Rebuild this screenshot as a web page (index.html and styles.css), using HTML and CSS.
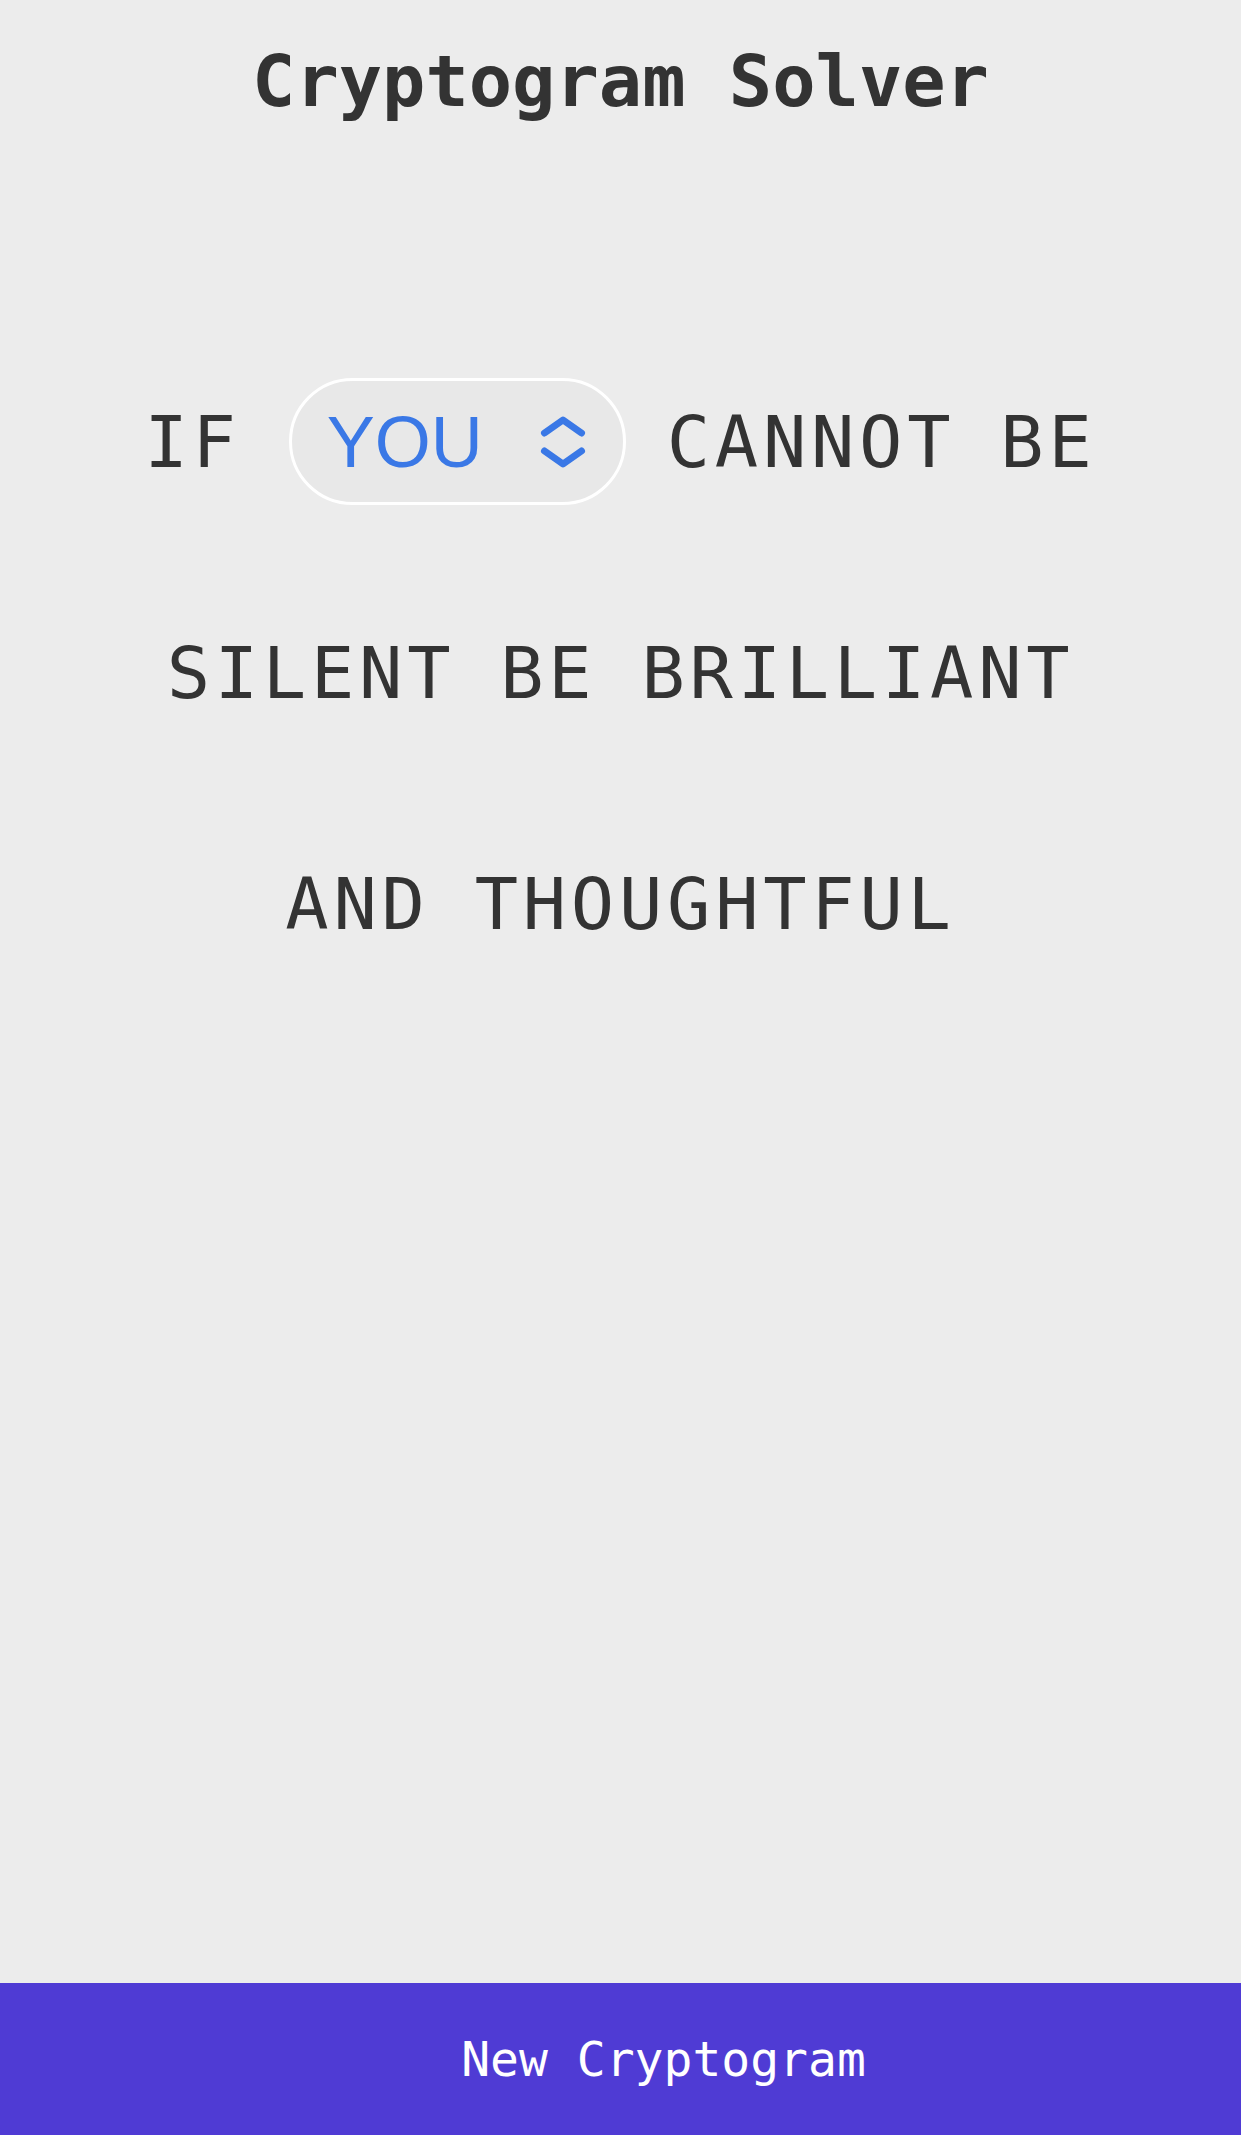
FILE: index.html
```html
<!DOCTYPE html>
<html lang="en">
<head>
<meta charset="utf-8">
<title>Cryptogram Solver</title>
<link rel="stylesheet" href="styles.css">
</head>
<body>
<div class="app">
  <main class="content">
    <h1 class="title">Cryptogram Solver</h1>
    <div class="puzzle">
      <div class="line">
        <span class="word">IF</span>
        <label class="pill">
          <span class="pill-text">YOU</span>
          <svg class="chevrons" viewBox="16 12 48 56" width="48" height="56" aria-hidden="true">
            <path d="M21.5 31 L40 18 L58.5 31" />
            <path d="M21.5 49 L40 62 L58.5 49" />
          </svg>
        </label>
        <span class="word">CANNOT</span>
        <span class="word">BE</span>
      </div>
      <div class="line">
        <span class="word">SILENT</span>
        <span class="word">BE</span>
        <span class="word">BRILLIANT</span>
      </div>
      <div class="line">
        <span class="word">AND</span>
        <span class="word">THOUGHTFUL</span>
      </div>
    </div>
  </main>
  <button class="new-btn" type="button">New Cryptogram</button>
</div>
</body>
</html>
```

FILE: styles.css
```css
html, body {
  margin: 0;
  padding: 0;
}

body {
  background: #ececec;
  color: #333333;
  font-family: "DejaVu Sans Mono", "Liberation Mono", monospace;
}

.app {
  min-height: 100vh;
  display: flex;
  flex-direction: column;
}

.content {
  flex: 1;
  display: flex;
  flex-direction: column;
  align-items: center;
}

.title {
  margin: 0;
  padding-top: 45px;
  font-size: 72px;
  line-height: 72px;
  font-weight: bold;
  color: #333333;
}

.puzzle {
  margin-top: 261px;
  display: flex;
  flex-direction: column;
  align-items: center;
  row-gap: 104px;
}

.line {
  display: flex;
  align-items: center;
  justify-content: center;
  column-gap: 45px;
  min-height: 127px;
}

.word {
  font-size: 72px;
  line-height: 72px;
  letter-spacing: 4.75px;
  color: #333333;
}

.pill {
  box-sizing: border-box;
  width: 337px;
  height: 127px;
  display: flex;
  align-items: center;
  justify-content: space-between;
  padding: 0 36px 0 35px;
  border: 3px solid #ffffff;
  border-radius: 64px;
  background: #e8e8e8;
  margin-left: 3px;
  margin-right: -4px;
}

.pill-text {
  font-family: "Liberation Sans", Arial, sans-serif;
  font-size: 72px;
  line-height: 72px;
  color: #3a78e6;
}

.chevrons {
  display: block;
  fill: none;
  stroke: #3a78e6;
  stroke-width: 7;
  stroke-linecap: round;
  stroke-linejoin: round;
}

.new-btn {
  display: block;
  width: 100%;
  height: 152px;
  margin: 0;
  padding: 0 0 0 86px;
  border: none;
  background: #4f3bd4;
  color: #ffffff;
  font-family: "DejaVu Sans Mono", "Liberation Mono", monospace;
  font-size: 48px;
  line-height: 48px;
  text-align: center;
  cursor: pointer;
}
```
